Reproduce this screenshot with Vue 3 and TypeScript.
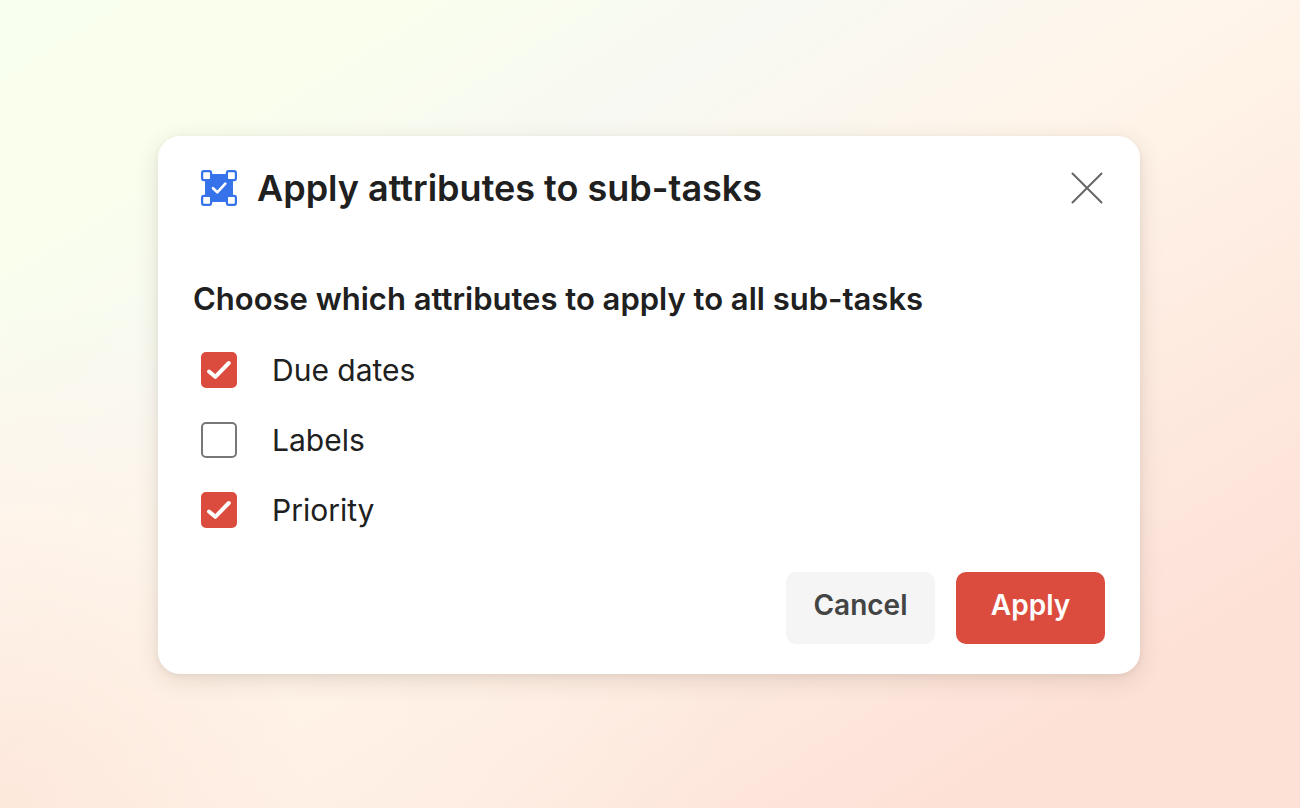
<script setup lang="ts">
import { reactive } from 'vue'

interface Attribute {
  id: string
  label: string
  checked: boolean
}

const attributes = reactive<Attribute[]>([
  { id: 'due-dates', label: 'Due dates', checked: true },
  { id: 'labels', label: 'Labels', checked: false },
  { id: 'priority', label: 'Priority', checked: true },
])
</script>

<template>
  <main class="page">
    <form class="dialog" role="dialog" aria-labelledby="dialog-title" @submit.prevent>
      <header class="head">
        <svg class="logo" viewBox="0 0 36 36" aria-hidden="true">
          <rect x="4" y="4" width="28" height="28" fill="#3673ea" />
          <g fill="#fff" stroke="#3673ea" stroke-width="2.200">
            <rect x="1.100" y="1.100" width="9" height="9" rx="1.800" />
            <rect x="25.900" y="1.100" width="9" height="9" rx="1.800" />
            <rect x="1.100" y="25.900" width="9" height="9" rx="1.800" />
            <rect x="25.900" y="25.900" width="9" height="9" rx="1.800" />
          </g>
          <path d="M12 18.200l4.300 4.100 8-8.600" fill="none" stroke="#fff" stroke-width="2.600" stroke-linecap="round" stroke-linejoin="round" />
        </svg>
        <h1 id="dialog-title" class="title">Apply attributes to sub-tasks</h1>
        <button class="close" type="button" aria-label="Close">
          <svg viewBox="0 0 32 32" aria-hidden="true">
            <path d="M1.500 1.500l29 29M30.500 1.500l-29 29" fill="none" stroke="#666" stroke-width="2" stroke-linecap="round" />
          </svg>
        </button>
      </header>

      <fieldset class="choices">
        <legend class="legend">Choose which attributes to apply to all sub-tasks</legend>
        <div class="list">
          <label v-for="item in attributes" :key="item.id" class="choice" :for="item.id">
            <span class="tick">
              <input :id="item.id" v-model="item.checked" class="box" type="checkbox" />
              <svg v-if="item.checked" class="mark" viewBox="0 0 36 36" aria-hidden="true">
                <path d="M8 19.500l6.300 5.300L27.800 11" fill="none" stroke="#fff" stroke-width="4" stroke-linecap="round" stroke-linejoin="round" />
              </svg>
            </span>
            <span>{{ item.label }}</span>
          </label>
        </div>
      </fieldset>

      <footer class="actions">
        <button class="btn cancel" type="button">Cancel</button>
        <button class="btn apply" type="submit">Apply</button>
      </footer>
    </form>
  </main>
</template>

<style>
body {
  margin: 0;
}
</style>

<style scoped>
.page {
  box-sizing: border-box;
  min-height: 100vh;
  display: flex;
  align-items: center;
  padding: 26px 160px 24px 158px;
  background:
    radial-gradient(ellipse 24% 36% at 0% 100%, rgba(253, 230, 218, 0.9), rgba(253, 230, 218, 0)),
    radial-gradient(ellipse 34% 36% at 22% 90%, rgba(255, 242, 231, 0.7), rgba(255, 242, 231, 0)),
    radial-gradient(ellipse 34% 28% at 0% 66%, rgba(255, 244, 234, 0.9), rgba(255, 244, 234, 0)),
    linear-gradient(148deg, #f9ffee 0%, #f9feed 16%, #f8f9f2 31%, #fff5ea 48%, #fde1d7 86%, #fde1d7 100%);
  font-family: Inter, "Liberation Sans", sans-serif;
  color: #202020;
}

.dialog {
  box-sizing: border-box;
  flex: 1;
  min-width: 0;
  padding: 32px 35px 30px;
  border-radius: 22px;
  background: #fff;
  box-shadow: 0 6px 24px rgba(60, 40, 20, 0.12), 0 2px 6px rgba(60, 40, 20, 0.06);
}

.head {
  display: flex;
  align-items: center;
  gap: 20px;
  padding-left: 8px;
}

.logo {
  flex: none;
  width: 36px;
  height: 36px;
}

.title {
  flex: 1;
  margin: 0;
  font-size: 36px;
  line-height: 40px;
  font-weight: 600;
}

.close {
  flex: none;
  display: flex;
  margin: 0;
  padding: 2px;
  border: 0;
  background: none;
  cursor: pointer;
}

.close svg {
  width: 32px;
  height: 32px;
}

.choices {
  margin: 71px 0 0;
  padding: 0;
  border: 0;
  min-width: 0;
}

.legend {
  margin-bottom: 33px;
  padding: 0;
  font-size: 31px;
  line-height: 40px;
  font-weight: 600;
}

.list {
  display: flex;
  flex-direction: column;
  align-items: flex-start;
  gap: 34px;
  padding-left: 8px;
}

.choice {
  display: flex;
  align-items: center;
  gap: 35px;
  font-size: 30px;
  line-height: 36px;
  cursor: pointer;
}

.tick {
  display: grid;
  width: 36px;
  height: 36px;
}

.box,
.mark {
  grid-area: 1 / 1;
  width: 36px;
  height: 36px;
}

.box {
  box-sizing: border-box;
  appearance: none;
  margin: 0;
  border: 2px solid #777;
  border-radius: 5px;
  background: #fff;
}

.box:checked {
  border-color: #dc4c3e;
  background: #dc4c3e;
}

.mark {
  pointer-events: none;
}

.actions {
  display: flex;
  justify-content: flex-end;
  gap: 21px;
  margin-top: 44px;
}

.btn {
  width: 149px;
  height: 72px;
  padding: 0 0 6px;
  border: 0;
  border-radius: 10px;
  font-family: inherit;
  font-size: 28px;
  line-height: 36px;
  font-weight: 600;
  cursor: pointer;
}

.cancel {
  background: #f5f5f5;
  color: #444;
}

.apply {
  background: #dc4c3e;
  color: #fff;
}
</style>
